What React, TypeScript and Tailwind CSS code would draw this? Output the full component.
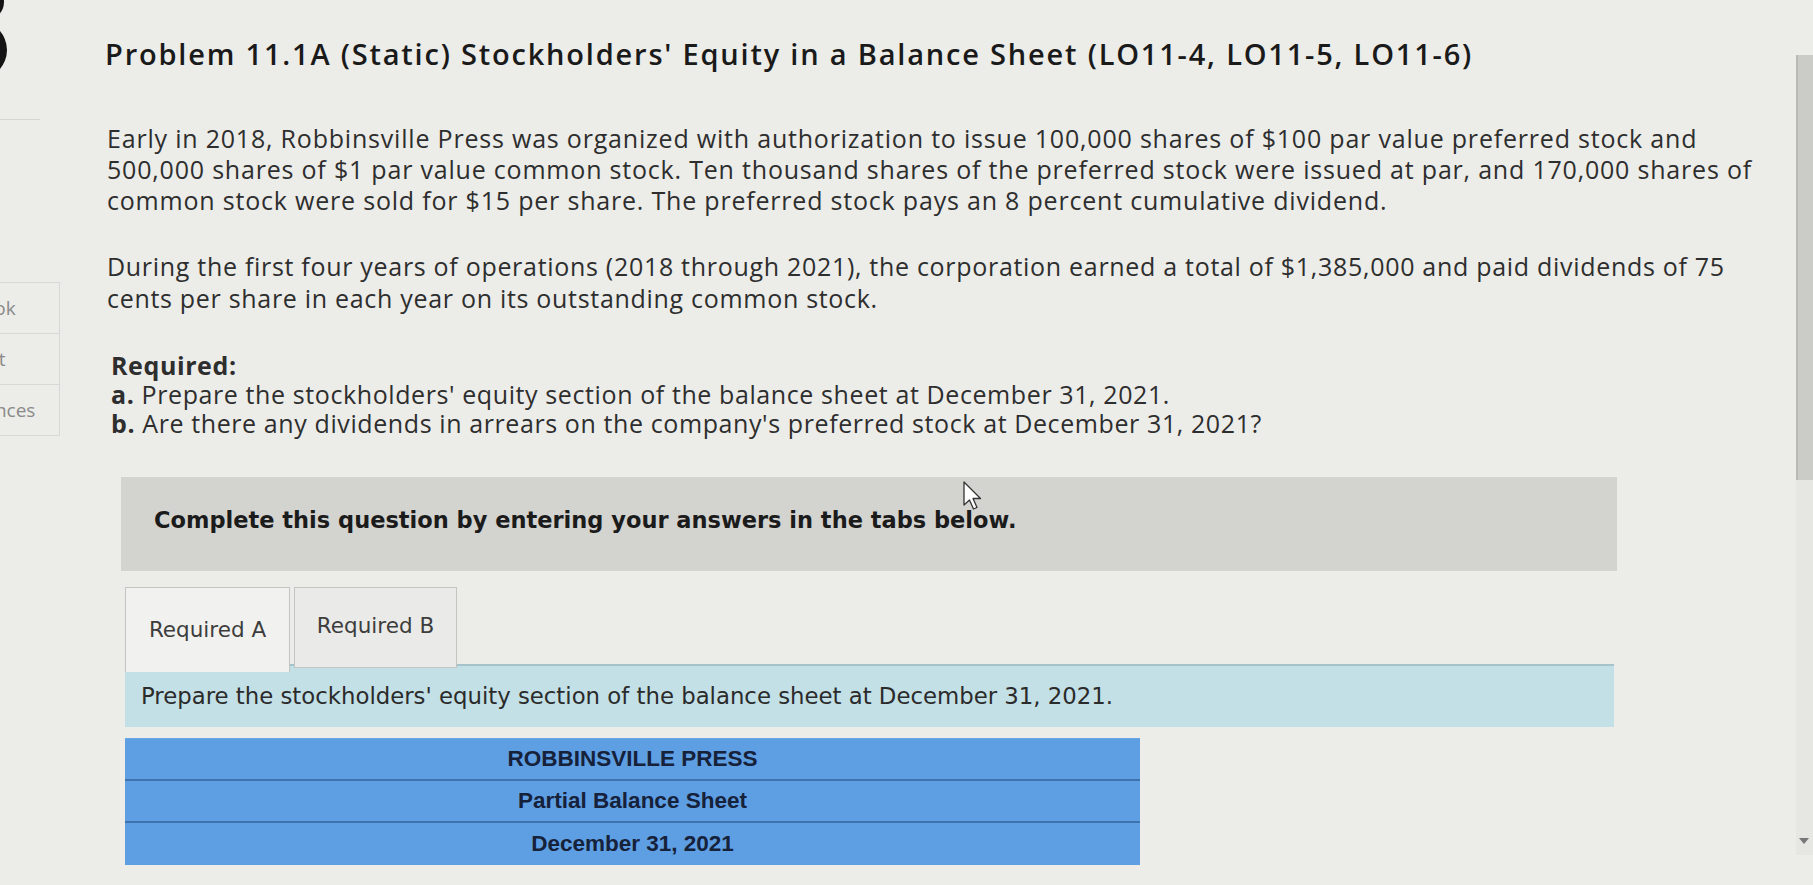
import React from "react";

const proxima = { fontFamily: "'Open Sans', Lato, sans-serif" };
const verdana = { fontFamily: "'DejaVu Sans', Verdana, sans-serif" };
const arial = { fontFamily: "'Liberation Sans', Arial, sans-serif" };

function Sidebar() {
  const items: [string, string][] = [
    ["eBook", "ml-[-40px]"],
    ["Print", "ml-[-37px]"],
    ["References", "ml-[-63px]"],
  ];
  return (
    <div className="w-[60px] shrink-0 flex flex-col">
      <div className="h-[120px] w-[40px] border-b border-[#d6d6d4] relative">
        <svg width="40" height="80" viewBox="0 0 40 80" className="absolute left-0 top-0">
          <circle cx="-14" cy="2" r="18" fill="#141414" />
          <circle cx="-22" cy="50" r="29" fill="#141414" />
        </svg>
      </div>
      <div className="h-[163px]" />
      {items.map(([t, ml]) => (
        <div
          key={t}
          className="h-[52px] border-b border-t border-r border-[#d8d8d6] -mt-px first:mt-0 flex items-center overflow-hidden"
        >
          <span className={ml + " whitespace-nowrap text-[19px] text-[#8a8a8a]"} style={proxima}>
            {t}
          </span>
        </div>
      ))}
    </div>
  );
}

function Cursor() {
  return (
    <svg width="26" height="32" viewBox="0 0 26 32" className="absolute left-[962px] top-[480px]">
      <path
        d="M2 2 L2 25 L7.5 20 L11.5 29 L15 27.5 L11 18.5 L18.5 18.5 Z"
        fill="#ffffff"
        stroke="#333"
        strokeWidth="1.3"
        strokeLinejoin="round"
      />
    </svg>
  );
}

export default function App() {
  return (
    <div className="w-[1813px] h-[885px] bg-[#ecece9] relative overflow-hidden flex">
      <Sidebar />
      <div className="flex-1 flex flex-col pl-[45px] pt-[35px]">
        <h1
          className="text-[29px] leading-[38px] font-semibold text-[#1a1a1a] whitespace-nowrap tracking-[1.8px]"
          style={proxima}
        >
          Problem 11.1A (Static) Stockholders' Equity in a Balance Sheet (LO11-4, LO11-5, LO11-6)
        </h1>

        <div className="pl-[2px] text-[25px] text-[#2e2e2e] whitespace-nowrap tracking-[0.8px]" style={proxima}>
          <p className="mt-[50px] leading-[31px]">
            Early in 2018, Robbinsville Press was organized with authorization to issue 100,000 shares of $100 par value preferred stock and
            <br />
            500,000 shares of $1 par value common stock. Ten thousand shares of the preferred stock were issued at par, and 170,000 shares of
            <br />
            common stock were sold for $15 per share. The preferred stock pays an 8 percent cumulative dividend.
          </p>
          <p className="mt-[34px] leading-[32px] tracking-[0.7px]">
            During the first four years of operations (2018 through 2021), the corporation earned a total of $1,385,000 and paid dividends of 75
            <br />
            cents per share in each year on its outstanding common stock.
          </p>
          <div className="mt-[37px] pl-[4px] leading-[29px] tracking-[0.6px]">
            <p className="font-bold">Required:</p>
            <p>
              <span className="font-bold">a.</span> Prepare the stockholders' equity section of the balance sheet at December 31, 2021.
            </p>
            <p>
              <span className="font-bold">b.</span> Are there any dividends in arrears on the company's preferred stock at December 31, 2021?
            </p>
          </div>
        </div>

        <div className="ml-[16px] mt-[39px] w-[1496px] h-[94px] bg-[#d3d3d0] pl-[33px] pt-[27px]">
          <p className="text-[22.5px] font-bold text-[#1b1b1b] leading-[32px]" style={verdana}>
            Complete this question by entering your answers in the tabs below.
          </p>
        </div>

        <div className="ml-[20px] mt-[16px] flex flex-col w-[1489px]">
          <div className="flex gap-[4px] items-start h-[77px] relative z-10">
            <div
              className="w-[165px] h-[85px] bg-[#f1f1ef] border border-[#c4c4c2] border-b-0 flex items-center justify-center text-[21.5px] text-[#3d3d3d]"
              style={verdana}
            >
              Required A
            </div>
            <div
              className="w-[163px] h-[81px] bg-[#eaeae8] border border-[#c4c4c2] flex items-center justify-center pb-[2px] text-[21.5px] text-[#3d3d3d]"
              style={verdana}
            >
              Required B
            </div>
          </div>
          <div className="h-[63px] bg-[#c3e0e7] border-t-2 border-[#a5c3cb] flex items-center pl-[16px]">
            <p className="text-[22.8px] text-[#2b2b2b]" style={verdana}>
              Prepare the stockholders' equity section of the balance sheet at December 31, 2021.
            </p>
          </div>
          <div className="mt-[11px] w-[1015px] bg-[#5e9ee3] border-t border-[#6aa6e6]" style={arial}>
            {["ROBBINSVILLE PRESS", "Partial Balance Sheet", "December 31, 2021"].map((t, i) => (
              <div
                key={t}
                className={
                  "h-[42px] flex items-center justify-center text-[22.5px] font-bold text-[#16213a] " +
                  (i < 2 ? "border-b-2 border-[#3f73ad]" : "")
                }
              >
                {t}
              </div>
            ))}
          </div>
        </div>
      </div>

      <div className="w-[17px] shrink-0 flex flex-col pt-[55px] pb-[30px] relative">
        <div className="h-[425px] bg-[#cbcbc8] border-l-2 border-[#b9b9b6]" />
        <div className="flex-1 bg-[#e6e6e3]" />
        <div className="absolute bottom-[41px] left-[3px] w-0 h-0 border-l-[5px] border-r-[5px] border-t-[6px] border-l-transparent border-r-transparent border-t-[#777]" />
      </div>

      <Cursor />
    </div>
  );
}
